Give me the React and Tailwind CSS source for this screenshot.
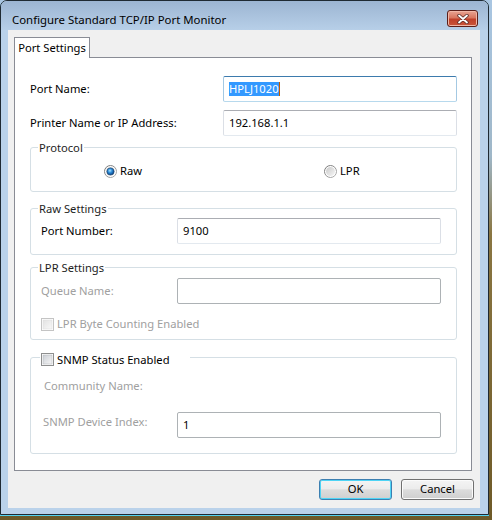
import React from "react";

// Vista-style "Configure Standard TCP/IP Port Monitor" dialog

const TextBox = ({ value, className = "", focused = false, disabled = false, selected = false }) => {
  const border = focused
    ? "border-t-[#3d7bad] border-x-[#a4c9e3] border-b-[#b7d9ed]"
    : disabled
    ? "border-[#adb2b5]"
    : "border-t-[#abadb3] border-x-[#dbdfe6] border-b-[#e3e9ef]";
  return (
    <div className={`flex items-center rounded-[2px] border bg-white pl-[5px] text-black ${border} ${className}`}>
      {selected ? (
        <span className="flex items-center">
          <span className="bg-[#3399ff] leading-[14px] text-white">{value}</span>
          <span className="h-[14px] w-px bg-[#c05a00]" />
        </span>
      ) : (
        value
      )}
    </div>
  );
};

const Radio = ({ id, checked = false }) => (
  <svg width="13" height="13" viewBox="0 0 13 13" className="shrink-0">
    <defs>
      <linearGradient id={`${id}-ring`} x1="0" y1="0" x2="1" y2="1">
        <stop offset="0" stopColor="#6f6f6f" />
        <stop offset="1" stopColor="#b4b4b4" />
      </linearGradient>
      <linearGradient id={`${id}-fill`} x1="0" y1="0" x2="1" y2="1">
        <stop offset="0" stopColor="#c9c9c9" />
        <stop offset="1" stopColor="#f6f6f6" />
      </linearGradient>
      <radialGradient id={`${id}-dot`} cx="0.42" cy="0.38" r="0.65">
        <stop offset="0" stopColor="#a8e4ff" />
        <stop offset="0.45" stopColor="#2a8ad8" />
        <stop offset="1" stopColor="#0a3a78" />
      </radialGradient>
    </defs>
    <circle cx="6.5" cy="6.5" r="6" fill="#ffffff" stroke={`url(#${id}-ring)`} strokeWidth="1" />
    <circle cx="6.5" cy="6.5" r="4.5" fill={`url(#${id}-fill)`} />
    {checked && <circle cx="6.5" cy="6.5" r="3.6" fill={`url(#${id}-dot)`} stroke="#123f6e" strokeWidth="0.6" />}
  </svg>
);

const CheckBox = ({ id, disabled = false }) => (
  <svg width="13" height="13" viewBox="0 0 13 13" className="shrink-0">
    <defs>
      <linearGradient id={`${id}-fill`} x1="0" y1="0" x2="1" y2="1">
        <stop offset="0" stopColor={disabled ? "#e2e2e2" : "#cbcfd5"} />
        <stop offset="1" stopColor={disabled ? "#f8f8f8" : "#f6f6f6"} />
      </linearGradient>
    </defs>
    <rect x="0.5" y="0.5" width="12" height="12" fill="#ffffff" stroke={disabled ? "#c4c4c4" : "#8e8f8f"} />
    <rect x="2" y="2" width="9" height="9" fill={`url(#${id}-fill)`} stroke={disabled ? "#dadada" : "#b0b3b8"} strokeWidth="0.5" />
  </svg>
);

const Legend = ({ children }) => (
  <div className="-mt-[8px] ml-[7px] h-[15px] w-fit bg-white px-[1px] leading-[15px] text-[#1e1e1e]">{children}</div>
);

const Button = ({ children, focused = false }) => (
  <div
    className={`flex h-[21px] w-[73px] items-center justify-center rounded-[3px] border bg-[linear-gradient(to_bottom,#f4f4f4_0%,#ececec_46%,#dcdcdc_52%,#cfcfcf_100%)] text-black ${
      focused ? "border-[#3c7fb1] shadow-[inset_0_0_0_1px_#4fd4f5]" : "border-[#707070] shadow-[inset_0_0_0_1px_#fbfbfb]"
    }`}
  >
    {children}
  </div>
);

export default function App() {
  return (
    <div className="h-[520px] w-[492px] overflow-hidden bg-[linear-gradient(to_bottom,#a9c6e2_0%,#9fb7c8_30%,#8a7642_45%,#6e5a28_100%)] font-['Noto_Sans',sans-serif] text-[11.2px]">
      <div className="flex h-[515px] w-[489px] flex-col rounded-t-[7px] border border-[#1f2a33] bg-[#bad2ea] shadow-[0_1px_0_#52d3ef]">
        {/* title bar */}
        <div className="flex h-[29px] shrink-0 items-start justify-between rounded-t-[6px] bg-[linear-gradient(to_bottom,#9cb5d2,#b7cfe8)] pl-[11px] pr-[10px]">
          <div className="mt-[11px] h-[15px] text-[11.4px] leading-[15px] text-black">
            Configure Standard TCP/IP Port Monitor
          </div>
          <div className="mt-[9px] flex h-[17px] w-[31px] items-center justify-center rounded-[3px] border border-[#5b1f1a] bg-[linear-gradient(to_bottom,#e8a493_0%,#d9765f_45%,#c0402a_55%,#c9553a_100%)] shadow-[inset_0_0_0_1px_#f0b6a6]">
            <svg width="12" height="10" viewBox="0 0 12 10">
              <path d="M2 1.5 L10 8.5 M10 1.5 L2 8.5" stroke="#5a2c28" strokeWidth="3.4" strokeLinecap="round" />
              <path d="M2 1.5 L10 8.5 M10 1.5 L2 8.5" stroke="#ffffff" strokeWidth="1.8" strokeLinecap="round" />
            </svg>
          </div>
        </div>

        {/* client area */}
        <div className="ml-[7px] mr-[8px] flex h-[478px] flex-col bg-[#f0f0f0] pl-[6px] pt-[7px]">
          <div className="relative z-10 -mb-px flex h-[21px] w-[76px] items-center justify-center border border-b-0 border-[#898c95] bg-white text-black">
            Port Settings
          </div>

          <div className="flex h-[414px] w-[458px] flex-col border border-[#898c95] bg-white text-black">
            <div className="mt-[18px] flex items-center pl-[15px]">
              <div className="w-[193px]">Port Name:</div>
              <TextBox value="HPLJ1020" focused selected className="h-[26px] w-[234px]" />
            </div>
            <div className="mt-[8px] flex items-center pl-[15px]">
              <div className="w-[193px]">Printer Name or IP Address:</div>
              <TextBox value="192.168.1.1" className="h-[26px] w-[234px]" />
            </div>

            {/* Protocol */}
            <div className="ml-[15px] mt-[11px] h-[45px] w-[427px] rounded-[3px] border border-[#d5dfe5]">
              <Legend>Protocol</Legend>
              <div className="mt-[9px] flex h-[15px] items-center pl-[73px]">
                <div className="flex w-[220px] items-center gap-[3px]">
                  <Radio id="raw" checked />
                  <span>Raw</span>
                </div>
                <div className="flex items-center gap-[3px]">
                  <Radio id="lpr" />
                  <span>LPR</span>
                </div>
              </div>
            </div>

            {/* Raw Settings */}
            <div className="ml-[15px] mt-[16px] h-[47px] w-[427px] rounded-[3px] border border-[#d5dfe5]">
              <Legend>Raw Settings</Legend>
              <div className="mt-[2px] flex items-center">
                <div className="w-[146px] pl-[10px]">Port Number:</div>
                <TextBox value="9100" className="h-[26px] w-[264px]" />
              </div>
            </div>

            {/* LPR Settings */}
            <div className="ml-[15px] mt-[12px] h-[73px] w-[427px] rounded-[3px] border border-[#d5dfe5]">
              <Legend>LPR Settings</Legend>
              <div className="mt-[3px] flex items-center">
                <div className="w-[146px] pl-[10px] text-[#a0a0a0]">Queue Name:</div>
                <TextBox value="" disabled className="h-[26px] w-[264px]" />
              </div>
              <div className="mt-[14px] flex h-[13px] items-center gap-[3px] pl-[10px] text-[#a0a0a0]">
                <CheckBox id="lprbyte" disabled />
                <span>LPR Byte Counting Enabled</span>
              </div>
            </div>

            {/* SNMP */}
            <div className="ml-[15px] mt-[17px] h-[97px] w-[427px] rounded-[3px] border border-[#d5dfe5]">
              <div className="-mt-[6px] ml-[9px] flex h-[15px] w-fit items-center gap-[3px] bg-white pl-[1px] pr-[20px] leading-[15px] text-black">
                <CheckBox id="snmp" />
                <span>SNMP Status Enabled</span>
              </div>
              <div className="mt-[11px] h-[15px] pl-[13px] leading-[15px] text-[#a0a0a0]">Community Name:</div>
              <div className="mt-[19px] flex items-start">
                <div className="mt-[2px] w-[146px] pl-[12px] leading-[15px] text-[#a0a0a0]">SNMP Device Index:</div>
                <TextBox value="1" disabled className="h-[26px] w-[264px]" />
              </div>
            </div>
          </div>

          <div className="mt-[8px] flex justify-end gap-[9px] pr-[6px]">
            <Button focused>OK</Button>
            <Button>Cancel</Button>
          </div>
        </div>
      </div>
    </div>
  );
}
